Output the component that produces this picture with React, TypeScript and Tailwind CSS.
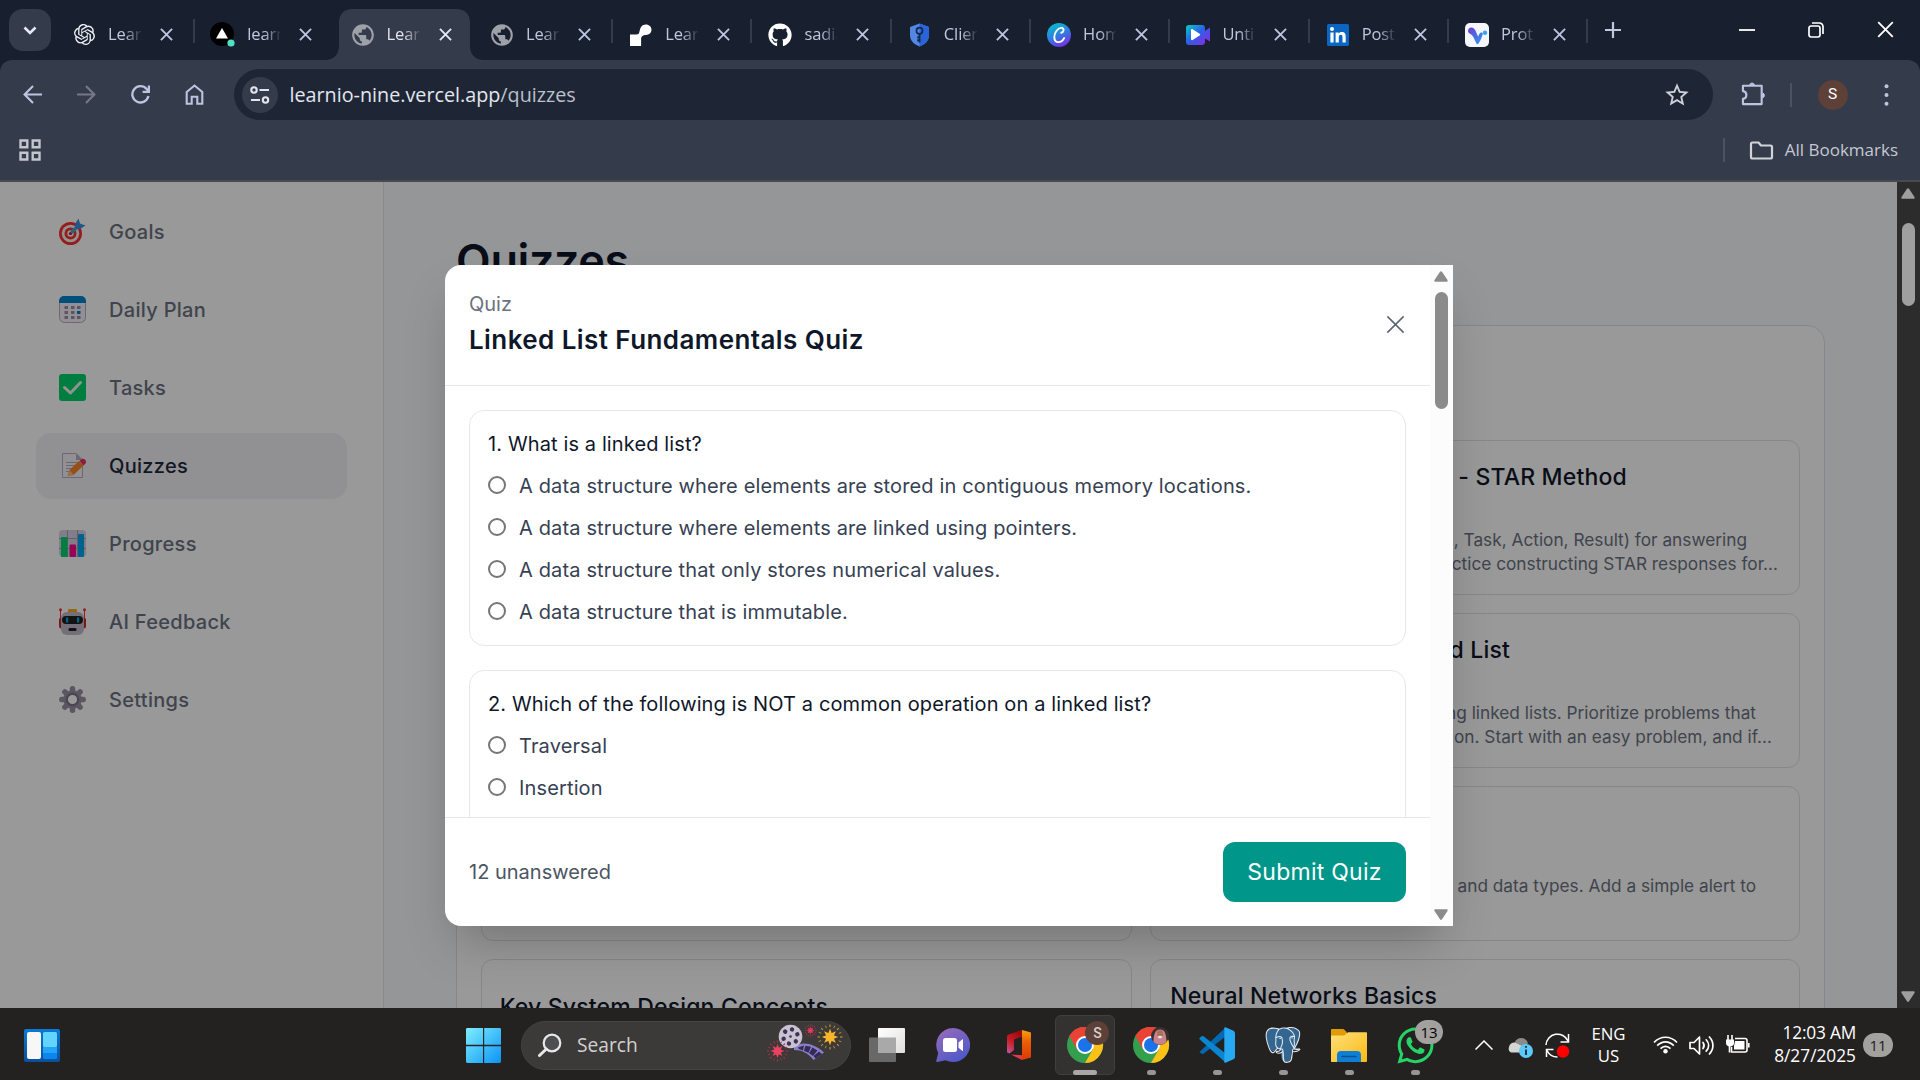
import type { ReactNode } from "react";
import { SiOpenai, SiPostgresql } from "react-icons/si";
import { FaGithub, FaWhatsapp } from "react-icons/fa6";
import { MdPublic, MdStarOutline } from "react-icons/md";

/* ---------- Favicons ---------- */

function VercelIcon() {
  return (
    <svg viewBox="0 0 26 26" className="size-[26px]">
      <circle cx="12" cy="12" r="12" fill="#000" />
      <path d="M12 6l6 10.500H6z" fill="#fff" />
      <circle cx="21" cy="21" r="3.600" fill="#50e3c2" />
    </svg>
  );
}

function BlobIcon() {
  return (
    <svg viewBox="0 0 22 22" className="size-[22px]">
      <path d="M0 10.500h6.500c3.500 0 2.500-3 4-6.500C11.500 1.500 13.500.5 16 .5c3 0 5.500 2.300 5.500 5.300s-2.400 5.200-5.400 5.200c-3 0-5 1-5 4.500V22H0z" fill="#fff" />
    </svg>
  );
}

function ShieldIcon() {
  return (
    <svg viewBox="0 0 20 24" className="h-[24px] w-[19px]">
      <path d="M10 0l10 3.500V12c0 6-4 10-10 12C4 22 0 18 0 12V3.500z" fill="#5486e4" />
      <path d="M10 0l10 3.500V12c0 6-4 10-10 12z" fill="#2b64d9" />
      <circle cx="10" cy="7.500" r="3.200" fill="none" stroke="#13284f" strokeWidth="1.800" />
      <path d="M10 10.500V20M10 14.500H7.500M10 17.500H7.500" stroke="#13284f" strokeWidth="2" fill="none" />
    </svg>
  );
}

function CanvaIcon() {
  return (
    <svg viewBox="0 0 24 24" className="size-6">
      <defs>
        <linearGradient id="cv" x1="0.200" y1="0" x2="0.700" y2="1">
          <stop offset="0" stopColor="#00c4cc" />
          <stop offset="0.500" stopColor="#2f7fe0" />
          <stop offset="1" stopColor="#7d2ae8" />
        </linearGradient>
      </defs>
      <circle cx="12" cy="12" r="12" fill="url(#cv)" />
      <path d="M14.200 9.800c2.600-.6 3.300-4.300.8-4.900-3.800-.6-7.600 4.500-7.700 9 0 3 1.600 5.200 4.300 5.200 2.300 0 4.300-1.600 5.500-4" fill="none" stroke="#fff" strokeWidth="1.900" strokeLinecap="round" />
    </svg>
  );
}

function ClipIcon() {
  return (
    <svg viewBox="0 0 24 20" className="h-[20px] w-[24px]">
      <defs>
        <linearGradient id="cl" x1="0" y1="0" x2="1" y2="1">
          <stop offset="0" stopColor="#06cfc0" />
          <stop offset="0.450" stopColor="#2a62ea" />
          <stop offset="1" stopColor="#9a20e0" />
        </linearGradient>
      </defs>
      <path d="M3 0h13a3 3 0 013 3v3l5-3.500v14L19 13.500V17a3 3 0 01-3 3H3a3 3 0 01-3-3V3a3 3 0 013-3z" fill="url(#cl)" />
      <path d="M5 5.200c0-1 .8-1.400 1.600-1l7 4.600c.8.500.8 1.300 0 1.800l-7 4.500c-.8.500-1.600 0-1.600-1z" fill="#fff" />
    </svg>
  );
}

function LinkedInIcon() {
  return (
    <svg viewBox="0 0 22 22" className="size-[22px]">
      <rect width="22" height="22" rx="1.500" fill="#0a66c2" />
      <circle cx="5" cy="5" r="2" fill="#fff" />
      <path d="M3.400 8.400h3.200v10.200H3.400zM8.600 8.400h3v1.400c.6-1 1.700-1.700 3.200-1.700 3 0 3.900 1.900 3.900 4.700v5.800h-3.200v-5.200c0-1.300-.1-2.700-1.700-2.700s-2 1.300-2 2.600v5.300H8.600z" fill="#fff" />
    </svg>
  );
}

function VIcon() {
  return (
    <svg viewBox="0 0 24 24" className="size-6">
      <defs>
        <linearGradient id="vg" x1="0" y1="0" x2="1" y2="1">
          <stop offset="0" stopColor="#6b3fd4" />
          <stop offset="1" stopColor="#2c9bf0" />
        </linearGradient>
      </defs>
      <rect width="24" height="24" rx="5" fill="#f6f7fd" />
      <path d="M3 8c0-2 1.300-3.600 3.400-3.600 1.800 0 3 .9 4 3.100l2.700 6 1.700-3.300c.6-1.200 3.400-.8 3 .8-1 3.600-2.500 7-4.300 9.500-.7 1-1.700.6-2.200-.3C9.500 16.800 8.500 12.500 5 10.800 3.800 10.200 3 9.200 3 8z" fill="url(#vg)" />
      <circle cx="20" cy="9.700" r="2.200" fill="#35a7f7" />
    </svg>
  );
}

/* ---------- Browser chrome ---------- */

function Cross({ className }: { className: string }) {
  return (
    <svg viewBox="0 0 14 14" className={className} fill="none" stroke="currentColor">
      <path d="M1 1l12 12M13 1L1 13" />
    </svg>
  );
}

type TabProps = { icon: ReactNode; label: string; active?: boolean; sep?: boolean };

function Tab({ icon, label, active, sep }: TabProps) {
  return (
    <div className="relative flex h-[51px] w-[139.300px] shrink-0 items-center">
      {active && (
        <svg viewBox="0 0 160 51" className="absolute -left-[10px] top-0 h-[51px] w-[160px]">
          <path d="M0 51c9 0 14-6 14-14V14C14 5 19 0 28 0h103c9 0 14 5 14 14v23c0 8 5 14 14 14z" fill="#343b4b" />
        </svg>
      )}
      <div className="relative -mt-[9px] ml-[15px] flex h-6 w-[26px] items-center justify-center self-center pt-[9px]">{icon}</div>
      <div className={`relative -mt-[2px] ml-[11px] w-[33px] overflow-hidden whitespace-nowrap text-[16.500px] leading-6 tracking-[-0.100px] [mask-image:linear-gradient(to_right,#000_50%,transparent_105%)] ${active ? "text-[#dfe3ee]" : "text-[#c0c8de]"}`}>
        {label}
      </div>
      <Cross className={`relative -mt-[9px] ml-[19px] box-content size-[13px] pt-[9px] stroke-2 ${active ? "text-[#e4e8f4]" : "text-[#bcc5e0]"}`} />
      {sep && <div className="ml-auto h-6 w-[2px] -translate-y-[4px] bg-[#343b4b]" />}
    </div>
  );
}

const tabs: TabProps[] = [
  { icon: <SiOpenai className="size-[21px] text-[#eef1f8]" />, label: "Learn", sep: true },
  { icon: <VercelIcon />, label: "learnio" },
  { icon: <MdPublic className="size-[26px] shrink-0 text-[#9ea1a8]" />, label: "Learn", active: true },
  { icon: <MdPublic className="size-[26px] shrink-0 text-[#9ea1a8]" />, label: "Learn", sep: true },
  { icon: <BlobIcon />, label: "Learn", sep: true },
  { icon: <FaGithub className="size-6 text-white" />, label: "sadia", sep: true },
  { icon: <ShieldIcon />, label: "Clients", sep: true },
  { icon: <CanvaIcon />, label: "Home", sep: true },
  { icon: <ClipIcon />, label: "Untitled", sep: true },
  { icon: <LinkedInIcon />, label: "Posts", sep: true },
  { icon: <VIcon />, label: "Proto", sep: true },
];

function BrowserChrome() {
  return (
    <header className="h-[182px] bg-[#18202f] font-['Open_Sans',sans-serif]">
      <div className="flex h-[60px] items-start pt-[9px]">
        <div className="ml-[9px] flex h-[42px] w-[42px] shrink-0 items-center justify-center rounded-[14px] bg-[#343b4b]">
          <svg viewBox="0 0 14 9" className="h-[9px] w-[14px]" fill="none" stroke="#e6e9f3" strokeWidth="2.600">
            <path d="M1.500 1.500L7 7l5.500-5.500" />
          </svg>
        </div>
        <div className="ml-[5px] flex">
          {tabs.map((t, i) => (
            <Tab key={i} {...t} />
          ))}
        </div>
        <svg viewBox="0 0 16 16" className="ml-[17px] mt-[13px] size-[16px] shrink-0" stroke="#c0c8de" strokeWidth="2.200">
          <path d="M8 0v16M0 8h16" />
        </svg>
        <div className="ml-auto mr-[26px] mt-[12px] flex items-center gap-[53px] text-white">
          <svg viewBox="0 0 16 16" className="size-[16px]" stroke="currentColor" strokeWidth="1.800">
            <path d="M0 8h16" />
          </svg>
          <svg viewBox="0 0 16 16" className="size-[16px]" fill="none" stroke="currentColor" strokeWidth="1.700">
            <rect x="1" y="4" width="11" height="11" rx="2.200" />
            <path d="M4 1h7.500A3.500 3.500 0 0115 4.500V12" />
          </svg>
          <Cross className="size-[17px] stroke-[1.500]" />
        </div>
      </div>
      <div className="h-[122px] rounded-t-[12px] border-b-2 border-[#484a4f] bg-[#343b4b]">
        <div className="flex h-[69px] items-center text-[#bcc5e0]">
          <svg viewBox="0 0 18 18" className="ml-[23px] size-[19px]" fill="none" stroke="currentColor" strokeWidth="2">
            <path d="M18 9H2M9.500 1L1.500 9l8 8" />
          </svg>
          <svg viewBox="0 0 18 18" className="ml-[35px] size-[19px]" fill="none" stroke="#747987" strokeWidth="2">
            <path d="M0 9h16M8.500 1l8 8-8 8" />
          </svg>
          <svg viewBox="0 0 18 18" className="ml-[35px] size-[19px]" fill="none" stroke="currentColor" strokeWidth="2.200">
            <path d="M16.500 10.500A7.700 7.700 0 1114.800 3.800L17 6M17 .5V6.500H11" />
          </svg>
          <svg viewBox="0 0 18 21" className="ml-[35px] h-[21px] w-[19px]" fill="none" stroke="currentColor" strokeWidth="2.100">
            <path d="M1.200 8L9 1.500 16.800 8v11.800h-5v-7H6.200v7h-5z" />
          </svg>
          <div className="ml-[29.500px] flex h-[51px] w-[1479px] items-center rounded-full bg-[#1e2636]">
            <div className="ml-[8px] flex size-[36px] items-center justify-center rounded-full bg-[#343b4b]">
              <svg viewBox="0 0 20 18" className="h-[18px] w-[20px]" fill="none" stroke="#e3e6ef" strokeWidth="2.100">
                <circle cx="4" cy="4" r="2.700" />
                <path d="M9.500 4H19M1 14h9" />
                <circle cx="15.500" cy="14" r="2.700" />
              </svg>
            </div>
            <p className="ml-[12px] text-[19.750px] leading-7 text-[#e3e6ef]">
              learnio-nine.vercel.app<span className="text-[#bcc0cb]">/quizzes</span>
            </p>
            <MdStarOutline className="ml-auto mr-[22px] size-[28px] text-[#cdd0d8]" />
          </div>
          <svg viewBox="0 0 26 26" className="ml-[28px] size-[25px] -translate-y-[1px]" fill="none" stroke="currentColor" strokeWidth="2.200" strokeLinejoin="round">
            <path d="M2 5h19.500v19H2v-5.500c4.800-.5 4.800-7.500 0-8z" />
            <path d="M9 4a2.600 2.600 0 015 0zM22.500 12.500a2.600 2.600 0 010 5z" fill="currentColor" strokeWidth="1" />
          </svg>
          <div className="ml-[24px] h-6 w-[2px] bg-[#4b5263]" />
          <div className="ml-[26px] flex size-[30px] items-center justify-center rounded-full bg-[#5d4037] font-['Roboto',sans-serif] text-[15.500px] text-white">S</div>
          <svg viewBox="0 0 4 22" className="ml-[36px] h-[22px] w-[5px]" fill="currentColor">
            <circle cx="2" cy="2.300" r="2" />
            <circle cx="2" cy="11" r="2" />
            <circle cx="2" cy="19.700" r="2" />
          </svg>
        </div>
        <div className="flex h-[42px] items-center pr-[22px] text-[#c4c8d2]">
          <svg viewBox="0 0 22 22" className="ml-[19px] size-[22px]" fill="none" stroke="#c3c6cf" strokeWidth="2.400">
            <path d="M1.500 1.500h6.800v6.800H1.500zM13.700 1.500h6.800v6.800h-6.800zM1.500 13.700h6.800v6.800H1.500zM13.700 13.700h6.800v6.800h-6.800z" />
          </svg>
          <div className="ml-auto h-6 w-[2px] bg-[#4b5263]" />
          <svg viewBox="0 0 24 19" className="ml-[24px] h-[19px] w-[25px]" fill="none" stroke="#d0d3da" strokeWidth="2.200" strokeLinejoin="round">
            <path d="M1.500 3c0-1 .5-1.500 1.500-1.500h6L11.500 4.500H21c1 0 1.500.5 1.500 1.500v10c0 1-.5 1.500-1.500 1.500H3c-1 0-1.500-.5-1.500-1.500z" />
          </svg>
          <span className="ml-[11px] text-[17px] leading-6">All Bookmarks</span>
        </div>
      </div>
    </header>
  );
}

/* ---------- Sidebar ---------- */

function TargetIcon() {
  return (
    <svg viewBox="0 0 27 27" className="size-[27px]">
      <circle cx="11.500" cy="15.500" r="11.500" fill="#f8312f" />
      <circle cx="11.500" cy="15.500" r="8.700" fill="#f4f4f4" />
      <circle cx="11.500" cy="15.500" r="6" fill="#f8312f" />
      <circle cx="11.500" cy="15.500" r="3.200" fill="#f4f4f4" />
      <circle cx="11.500" cy="15.500" r="1.600" fill="#ca0b4a" />
      <path d="M12.500 14.500L20 7" stroke="#44a9c9" strokeWidth="3.600" />
      <path d="M16 6l3.500-5.500L21 5.500l5.500 2L21 11l-4.500-.5z" fill="#3f8ee0" />
    </svg>
  );
}

function CalendarIcon() {
  return (
    <svg viewBox="0 0 27 27" className="size-[27px]">
      <rect x="0.500" y="0.500" width="26" height="26" rx="5" fill="#f3eef8" stroke="#b4acbc" />
      <path d="M0 7V5a5 5 0 015-5h17a5 5 0 015 5v2z" fill="#0084ce" />
      <path d="M5.500 10h3.500v3H5.500zM12 10h3.500v3H12zM18 10h3.500v3H18zM5.500 15h3.500v3H5.500zM12 15h3.500v3H12zM5.500 20h3.500v3H5.500zM12 20h3.500v3H12zM18 20h3.500v3H18z" fill="#998ea4" />
      <path d="M18 15h3.500v3H18z" fill="#0084ce" />
    </svg>
  );
}

function CheckIcon() {
  return (
    <svg viewBox="0 0 27 27" className="size-[27px]">
      <rect width="27" height="27" rx="3" fill="#00d26a" />
      <path d="M5.500 13.500l6 5.500L21.500 8.500" fill="none" stroke="#f4f4f4" strokeWidth="3" strokeLinecap="round" strokeLinejoin="round" />
    </svg>
  );
}

function MemoIcon() {
  return (
    <svg viewBox="0 0 27 27" className="size-[27px]">
      <path d="M3.500 1.500h13.500l6.500 6.500v17.500h-20z" fill="#f3eef8" stroke="#b4acbc" />
      <path d="M17 1.500V8h6.500z" fill="#b4acbc" />
      <path d="M7 10.500h13M7 13.500h12M7 16.500h9M7 19.500h5" stroke="#b4acbc" strokeWidth="1.200" />
      <path d="M8.500 24l2-6L20 9l4.500 4.500L14.500 23z" fill="#f9862b" />
      <path d="M8.500 24l2-6 4 5z" fill="#f8c27a" />
      <path d="M20.500 9l2-1.800c2-1.600 6 1.400 4 4.300l-2 2z" fill="#ec2f5d" />
    </svg>
  );
}

function BarsIcon() {
  return (
    <svg viewBox="0 0 27 27" className="size-[27px]">
      <rect width="27" height="27" rx="4" fill="#d9d0e6" />
      <path d="M8.500 0v27M18.500 0v27M0 8.500h27M0 18.500h27" stroke="#a89fb4" />
      <rect x="2" y="7" width="6.500" height="20" rx="1" fill="#00d26a" />
      <rect x="10.500" y="14.500" width="6.500" height="12.500" rx="1" fill="#f70a8d" />
      <rect x="19" y="4" width="6" height="23" rx="1" fill="#00a6ed" />
    </svg>
  );
}

function RobotIcon() {
  return (
    <svg viewBox="0 0 27 27" className="size-[27px]">
      <path d="M1.500 1v10M25.500 1v10" stroke="#f8312f" />
      <circle cx="1.500" cy="1.700" r="1.500" fill="#f8312f" />
      <circle cx="25.500" cy="1.700" r="1.500" fill="#f8312f" />
      <path d="M0 10.500h3v10H2a2 2 0 01-2-2zM24 10.500h3v8a2 2 0 01-2 2h-1z" fill="#ca2c2c" />
      <rect x="9" y="1" width="9" height="5" rx="1" fill="#f3ad1f" />
      <rect x="2" y="4" width="23" height="23" rx="6" fill="#c3bacb" />
      <rect x="3" y="8" width="21" height="8" rx="4" fill="#212121" />
      <rect x="7" y="9.500" width="2.200" height="5" fill="#00a6ed" />
      <rect x="18" y="9.500" width="2.200" height="5" fill="#00a6ed" />
      <rect x="9.500" y="20" width="8" height="3" rx="1.200" fill="#212121" />
    </svg>
  );
}

function GearIcon() {
  return (
    <svg viewBox="-13.500 -13.500 27 27" className="size-[27px]">
      <path d="M0-10.700V10.700M-10.700 0H10.700M-7.600-7.600L7.600 7.600M-7.600 7.600L7.600-7.600" stroke="#998ea4" strokeWidth="5.500" strokeLinecap="round" />
      <circle r="9.300" fill="#998ea4" />
      <circle r="5.700" fill="#fff" stroke="#7d7387" strokeWidth="2.200" />
    </svg>
  );
}

const nav = [
  { icon: <TargetIcon />, label: "Goals" },
  { icon: <CalendarIcon />, label: "Daily Plan" },
  { icon: <CheckIcon />, label: "Tasks" },
  { icon: <MemoIcon />, label: "Quizzes", active: true },
  { icon: <BarsIcon />, label: "Progress" },
  { icon: <RobotIcon />, label: "AI Feedback" },
  { icon: <GearIcon />, label: "Settings" },
];

function Sidebar() {
  return (
    <aside className="w-[384px] shrink-0 border-r border-[#e5e7eb] bg-white pt-[17px]">
      <nav className="ml-[36px] flex w-[311px] flex-col gap-[12px]">
        {nav.map((n) => (
          <div key={n.label} className={`flex h-[66px] items-center rounded-[15px] pl-[23px] text-[20px] font-medium tracking-[0.300px] ${n.active ? "bg-[#f2f2f5] text-[#1e293b]" : "text-[#6b7280]"}`}>
            <span className="-mt-px">{n.icon}</span>
            <span className="ml-[23px]">{n.label}</span>
          </div>
        ))}
      </nav>
    </aside>
  );
}

/* ---------- Quiz list ---------- */

type CardProps = { title?: string; titleRight?: number; lines?: { text: string; right: number }[]; short?: boolean };

function Line({ right, className, children }: { right: number; className: string; children: ReactNode }) {
  return (
    <div className={`flex justify-end whitespace-nowrap ${className}`} style={{ width: right }}>
      <span>{children}</span>
    </div>
  );
}

function QuizCard({ title, titleRight = 300, lines = [], short }: CardProps) {
  return (
    <article className={`h-[154.500px] rounded-[12px] border border-[#e2e2e4] pl-[18px] ${short ? "pt-[30px]" : "pt-[19px]"}`}>
      <Line right={titleRight} className="h-[34px] text-[23px] font-medium leading-[34px] tracking-[0.180px] text-[#0f172a]">{title}</Line>
      <div className="mt-[34px]">
        {lines.map((l) => (
          <Line key={l.text} right={l.right} className="h-[24px] text-[17.250px] leading-6 text-[#6b7280]">{l.text}</Line>
        ))}
      </div>
    </article>
  );
}

const cards: CardProps[] = [
  {},
  {
    title: "Interview Prep - STAR Method",
    titleRight: 458,
    lines: [
      { text: "Review STAR (Situation, Task, Action, Result) for answering", right: 578 },
      { text: "questions. Practice constructing STAR responses for…", right: 609 },
    ],
  },
  {},
  {
    title: "Practice: Linked List",
    titleRight: 341,
    lines: [
      { text: "Solve problems using linked lists. Prioritize problems that", right: 587 },
      { text: "use insertion. Start with an easy problem, and if…", right: 603 },
    ],
  },
  {},
  { title: "JavaScript", titleRight: 120, lines: [{ text: "Practice variables and data types. Add a simple alert to", right: 587 }] },
  { title: "Key System Design Concepts", titleRight: 328, short: true },
  { title: "Neural Networks Basics", titleRight: 268 },
];

function QuizList() {
  return (
    <main className="h-[826px] flex-1 overflow-hidden bg-[#f8fafc] pl-[72px] pt-[49px]">
      <h1 className="h-[60px] text-[45px] font-semibold leading-[60px] tracking-[-0.400px] text-[#0f172a]">Quizzes</h1>
      <section className="mt-[34px] h-[740px] w-[1369px] rounded-[18px] border border-[#dfe2e6] bg-white px-[24px] pt-[114px]">
        <div className="grid grid-cols-[651px_650px] gap-x-[18px] gap-y-[18.500px]">
          {cards.map((c, i) => (
            <QuizCard key={i} {...c} />
          ))}
        </div>
      </section>
    </main>
  );
}

/* ---------- Scrollbars ---------- */

function Arrow({ className }: { className: string }) {
  return (
    <svg viewBox="0 0 14 11" className={className} fill="currentColor">
      <path d="M6 .8c.5-.9 1.500-.9 2 0l5.500 8.200c.5 1 0 1.800-1 1.800h-11c-1 0-1.500-.8-1-1.800z" />
    </svg>
  );
}

/* ---------- Modal ---------- */

function Question({ text, options }: { text: string; options: string[] }) {
  return (
    <section className="h-[235.500px] shrink-0 rounded-[15px] border border-[#e5e7eb] pl-[18px] pt-[18px]">
      <p className="h-[30px] text-[20px] leading-[30px] tracking-[0.120px] text-[#0f172a]">{text}</p>
      <div className="mt-[12px] flex flex-col gap-[12px]">
        {options.map((o) => (
          <label key={o} className="flex h-[30px] items-center gap-[13px] text-[20px] tracking-[0.140px] text-[#364153]">
            <span className="mb-[2px] size-[18px] rounded-full border-2 border-[#767676]" />
            {o}
          </label>
        ))}
      </div>
    </section>
  );
}

function QuizModal() {
  return (
    <div className="flex h-[661px] w-[1008px] overflow-hidden rounded-l-[16px] bg-white shadow-[0_25px_50px_-12px_rgba(0,0,0,0.250)]">
      <div className="flex w-[985px] flex-col">
        <div className="flex h-[121px] shrink-0 justify-between border-b border-[#e5e7eb] pl-[24px] pr-[25px]">
          <div className="pt-[24px]">
            <p className="text-[20px] leading-[30px] text-[#6b7280]">Quiz</p>
            <h2 className="mt-[3px] text-[26px] font-semibold leading-[36px] tracking-[0.420px] text-[#0f172a]">Linked List Fundamentals Quiz</h2>
          </div>
          <Cross className="mt-[50px] size-[19px] stroke-[1.100] text-[#5b6472]" />
        </div>
        <div className="flex h-[431px] flex-col gap-[24px] overflow-hidden pl-[24px] pr-[24px] pt-[24px]">
          <Question
            text="1. What is a linked list?"
            options={[
              "A data structure where elements are stored in contiguous memory locations.",
              "A data structure where elements are linked using pointers.",
              "A data structure that only stores numerical values.",
              "A data structure that is immutable.",
            ]}
          />
          <Question
            text="2. Which of the following is NOT a common operation on a linked list?"
            options={["Traversal", "Insertion"]}
          />
        </div>
        <div className="flex h-[109px] items-center justify-between border-t border-[#e5e7eb] pl-[24px] pr-[24px]">
          <span className="text-[20px] text-[#4b5563]">12 unanswered</span>
          <button className="h-[60px] w-[183px] rounded-[12px] bg-[#009689] text-[23px] tracking-[0.250px] text-white">Submit Quiz</button>
        </div>
      </div>
      <div className="flex w-[23px] flex-col items-center bg-[#fcfcfc] py-[6px] pr-[1px] text-[#8b8b8b]">
        <Arrow className="h-[11px] w-[14px]" />
        <div className="mt-[10px] h-[117px] w-[13px] rounded-full bg-[#8b8b8b]" />
        <Arrow className="mt-auto h-[11px] w-[14px] rotate-180" />
      </div>
    </div>
  );
}

/* ---------- Taskbar ---------- */

function WidgetsIcon() {
  return (
    <svg viewBox="0 0 36 33" className="h-[33px] w-[36px]">
      <defs>
        <linearGradient id="wd" x1="0" y1="0" x2="0" y2="1"><stop offset="0" stopColor="#0a7ad6" /><stop offset="1" stopColor="#0b4f9c" /></linearGradient>
      </defs>
      <rect width="36" height="33" rx="2" fill="url(#wd)" />
      <rect x="3" y="3" width="14" height="27" rx="2" fill="#f7f7f7" />
      <rect x="19" y="3" width="14" height="15" rx="1.500" fill="#62d4fd" />
      <rect x="19" y="18" width="14" height="6" fill="#22a5f8" />
      <path d="M19 24h14v4.500a1.500 1.500 0 01-1.500 1.500h-11a1.500 1.500 0 01-1.500-1.500z" fill="#0b86ea" />
    </svg>
  );
}

function StartIcon() {
  return (
    <svg viewBox="0 0 36 36" className="size-[35px]">
      <defs>
        <linearGradient id="st" gradientUnits="userSpaceOnUse" x1="0" y1="0" x2="36" y2="36"><stop offset="0" stopColor="#7eeffd" /><stop offset="1" stopColor="#0a93f5" /></linearGradient>
      </defs>
      <path d="M1.500 0h16v17.300H0V1.500A1.500 1.500 0 011.500 0zM18.700 0h15.800A1.500 1.500 0 0136 1.500v15.800H18.700zM0 18.700h17.500V36h-16A1.500 1.500 0 010 34.500zM18.700 18.700H36v15.800a1.500 1.500 0 01-1.500 1.500H18.700z" fill="url(#st)" />
    </svg>
  );
}

function SearchArt() {
  const rays = [0, 45, 90, 135, 180, 225, 270, 315];
  const holes = [0, 60, 120, 180, 240, 300];
  const burst = (cx: number, cy: number, r: number, color: string, ray: string) => (
    <g transform={`translate(${cx} ${cy})`}>
      {rays.map((a) => (
        <g key={a} transform={`rotate(${a})`}>
          <path d={`M${-r * 0.25} 0L0 ${-r * 0.66}L${r * 0.25} 0z`} fill={color} />
          <path d={`M0 ${-r * 0.8}V${-r}`} stroke={ray} strokeWidth="1.200" />
          <path d={`M${r * 0.3} ${-r * 0.7}L${r * 0.38} ${-r * 0.9}`} stroke={ray} strokeWidth="0.900" />
        </g>
      ))}
    </g>
  );
  return (
    <svg viewBox="0 0 78 40" className="h-[40px] w-[78px]">
      <path d="M27 23c6-5.500 19-5 30 5.500L46.500 36C41 29 35 26 27 26z" fill="#8b7fc9" />
      <path d="M31 23.500l6-2-1 5-4-1.500zM38.500 21.700l5.500 1-2.500 6-4.500-2zM45.500 23.500l5 3-4.500 5.500-4-3zM52 27.500l3 2.500-6.500 4.500-2-2.500z" fill="#352a55" />
      <circle cx="23.500" cy="12.500" r="11.800" fill="#c9c2d2" />
      <circle cx="23.500" cy="12.500" r="1.300" fill="#3b3350" />
      {holes.map((a) => (
        <circle key={a} cx="23.500" cy="5.300" r="2.200" fill="#3b3350" transform={`rotate(${a + 12} 23.500 12.500)`} />
      ))}
      {burst(63, 13, 12.500, "#f9b52a", "#c98d2b")}
      {burst(43.500, 6.500, 6, "#e8395c", "#a72c45")}
      {burst(10.500, 27, 10.500, "#ee4162", "#b32d48")}
    </svg>
  );
}

function TaskViewIcon() {
  return (
    <svg viewBox="0 0 36 34" className="h-[34px] w-[36px]">
      <defs>
        <linearGradient id="tv" x1="0" y1="0" x2="1" y2="1"><stop offset="0" stopColor="#fff" /><stop offset="1" stopColor="#dedede" /></linearGradient>
      </defs>
      <rect x="0" y="9.500" width="27" height="24.500" rx="1" fill="#686868" />
      <rect x="9" y="0" width="27" height="25" rx="1" fill="url(#tv)" />
      <rect x="9" y="9.500" width="18" height="15.500" fill="#a9a9a9" />
    </svg>
  );
}

function ChatIcon() {
  return (
    <svg viewBox="0 0 34 34" className="size-[34px]">
      <defs>
        <linearGradient id="ch" x1="0" y1="0" x2="0.600" y2="1"><stop offset="0" stopColor="#9c6bb8" /><stop offset="1" stopColor="#5059c9" /></linearGradient>
      </defs>
      <path d="M17 0a17 17 0 11-7.500 32.200L1.500 34c-1 .2-1.500-.4-1.200-1.300L2.200 25A17 17 0 0117 0z" fill="url(#ch)" />
      <rect x="7" y="10" width="14" height="14" rx="2.500" fill="#fff" />
      <path d="M22.500 14.500l4-3.200c.5-.3.500 0 .5.500v10.600c0 .5 0 .8-.5.500l-4-3.200z" fill="#fff" />
    </svg>
  );
}

function OfficeIcon() {
  return (
    <svg viewBox="0 0 24 30" className="h-[30px] w-[24px]">
      <defs>
        <linearGradient id="of" x1="0" y1="0" x2="0" y2="1"><stop offset="0" stopColor="#f5a30c" /><stop offset="0.400" stopColor="#ee5d07" /><stop offset="1" stopColor="#d83b01" /></linearGradient>
        <linearGradient id="og" x1="0.500" y1="0" x2="0" y2="1"><stop offset="0" stopColor="#a3080f" /><stop offset="0.500" stopColor="#c9202a" /><stop offset="1" stopColor="#c45ba0" /></linearGradient>
      </defs>
      <path d="M15 0l9 2.500v25L15 30z" fill="url(#of)" />
      <path d="M15 0v6.500L7 9.500V20l-4.500 3.500C1 23 0 22.500 0 21.500V7c0-1.500.8-2.300 2-2.800z" fill="url(#og)" />
      <path d="M4 24.500l11 .8V30z" fill="#e33b4d" />
    </svg>
  );
}

function ChromeIcon({ badge }: { badge: ReactNode }) {
  return (
    <svg viewBox="0 0 48 48" className="size-[48px]">
      <g transform="translate(24 24)">
        <circle r="18" fill="#34a04f" />
        <path d="M-15.600-9A18 18 0 0115.600-9H0z" fill="#ea4335" />
        <path d="M-15.600-9A18 18 0 010-18V-8L-7.800 4.500z" fill="#ea4335" />
        <path d="M15.600-9A18 18 0 010 18L7.800 4.500 0-9z" fill="#fbc116" />
        <circle r="9" fill="#fff" />
        <circle r="7" fill="#1a73e8" />
      </g>
      {badge}
    </svg>
  );
}

function VSCodeIcon() {
  return (
    <svg viewBox="0 0 36 36" className="size-[36px]">
      <path d="M1.300 24.300L26.500.5v9L4.500 26.700c-.6.500-1.300.5-1.900 0L.8 25.200c-.4-.3 0-.6.500-.9z" fill="#0069b3" />
      <path d="M.8 10.800L2.600 9.300c.6-.5 1.300-.5 1.900 0l22 17.200v9L.8 12.600c-.5-.5-.5-1.300 0-1.800z" fill="#0a86d1" />
      <path d="M26.500.2L34 3.500c1.200.6 2 1.500 2 2.800v23.400c0 1.300-.8 2.200-2 2.800l-7.500 3.300c-.5.200-1.200 0-1.200-1V1.200c0-1 .7-1.200 1.200-1z" fill="#27a8f2" />
    </svg>
  );
}

function PostgresIcon() {
  return (
    <div className="relative size-[36px]">
      <svg viewBox="0 0 36 36" className="absolute inset-0 size-[36px]">
        <path d="M8 1C3 1 1 4 1.500 9c.6 6 3 13 5.500 15 2 1 3-1 5-2.500 2 1.500 3 1 4 3 0 4 0 10 5 10.500 5 0 5-5 6-12 3 0 6-.5 7-2-1-1-4 .5-4-1 2-3 6-12 4.500-16C32 .5 27 .5 23 1.500 18 .8 14 1.500 8 1z" fill="#336791" />
      </svg>
      <SiPostgresql className="relative size-[36px] text-[#dfe6ec]" />
    </div>
  );
}

function FolderIcon() {
  return (
    <svg viewBox="0 0 36 33" className="h-[33px] w-[36px]">
      <defs>
        <linearGradient id="fo" x1="0" y1="0" x2="1" y2="1"><stop offset="0" stopColor="#ffe07a" /><stop offset="1" stopColor="#fbb915" /></linearGradient>
      </defs>
      <path d="M1 0h10.500c1 0 1.500.3 2.200 1L16 3.500V9H0V1c0-.6.400-1 1-1z" fill="#e09b07" />
      <path d="M0 6.500h12c1 0 1.800-.3 2.500-1L16 4c.5-.6 1-.8 2-.8h17c.6 0 1 .4 1 1V32c0 .6-.4 1-1 1H1c-.6 0-1-.4-1-1z" fill="url(#fo)" />
      <path d="M6 33v-7a4 4 0 014-4h16a4 4 0 014 4v7z" fill="#0f7fd6" />
      <path d="M11 27.500h14" stroke="#0a4f94" strokeWidth="1.600" strokeLinecap="round" />
    </svg>
  );
}

function Cell({ children, running, active }: { children: ReactNode; running?: boolean; active?: boolean }) {
  return (
    <div className="flex w-[66px] shrink-0 justify-center">
      <div className={`relative flex h-[60px] w-[60px] items-center justify-center rounded-[6px] ${active ? "border border-[#403f3e] bg-[#333231]" : ""}`}>
        {children}
        {running && (
          <div className={active ? "absolute -bottom-px left-[17px] h-[5px] w-[24px] rounded-full bg-[#aaa8a5]" : "absolute bottom-0 left-[25.500px] h-[5px] w-[9px] rounded-full bg-[#989693]"} />
        )}
      </div>
    </div>
  );
}

function Taskbar() {
  return (
    <footer className="flex h-[72px] items-center bg-[#242221] pt-[2px] font-['Open_Sans',sans-serif] text-white">
      <div className="ml-[24px]"><WidgetsIcon /></div>
      <div className="ml-[406px]"><StartIcon /></div>
      <div className="ml-[20px] flex h-[49px] w-[330px] shrink-0 items-center rounded-full border border-[#454443] bg-[#3b3a39]">
        <svg viewBox="0 0 24 24" className="ml-[16px] size-[24px]" fill="none" stroke="#e8e8ea" strokeWidth="2.200">
          <circle cx="14" cy="10" r="8.300" fill="#4c4e51" />
          <path d="M8.300 16L1.500 22.500" strokeWidth="3" strokeLinecap="round" />
        </svg>
        <span className="ml-[15px] text-[19.200px] leading-7 text-[#d2d1d0]">Search</span>
        <div className="ml-auto mr-[5px] -mt-[2px]"><SearchArt /></div>
      </div>
      <div className="ml-[3px] flex">
        <Cell><TaskViewIcon /></Cell>
        <Cell><ChatIcon /></Cell>
        <Cell><OfficeIcon /></Cell>
        <Cell active running>
          <ChromeIcon
            badge={
              <g>
                <circle cx="36" cy="12" r="12" fill="#5d4037" />
                <text x="36.500" y="17" textAnchor="middle" fontSize="14" fontWeight="500" fill="#d6cfcb" fontFamily="Roboto">S</text>
              </g>
            }
          />
        </Cell>
        <Cell running>
          <ChromeIcon
            badge={
              <g>
                <circle cx="33" cy="15" r="9" fill="#3a2f2e" />
                <path d="M26.500 21c0-6 1-12.500 6.500-12.500s6 5.500 6.500 12.500c-4 3.500-9 3.500-13 0z" fill="#c9828c" />
                <ellipse cx="33" cy="13" rx="3" ry="4" fill="#a8705a" />
                <path d="M30.500 15.500c1.500-1 3.500-1 5 0-.5 2.500-4.500 2.500-5 0z" fill="#e8e3e0" />
              </g>
            }
          />
        </Cell>
        <Cell running><VSCodeIcon /></Cell>
        <Cell running><PostgresIcon /></Cell>
        <Cell running><FolderIcon /></Cell>
        <Cell running>
          <FaWhatsapp className="size-[41px] shrink-0 text-[#25d366]" />
          <div className="absolute right-[2px] top-[5px] flex h-6 w-[28px] items-center justify-center rounded-full bg-[#a3a19e] text-[15px] text-black">13</div>
        </Cell>
      </div>
      <svg viewBox="0 0 18 10" className="ml-[27px] h-[10px] w-[18px] shrink-0" fill="none" stroke="#fff" strokeWidth="1.500">
        <path d="M.5 9.500L9 1l8.500 8.500" />
      </svg>
      <svg viewBox="0 0 25 21" className="ml-[15px] mt-[4px] h-[21px] w-[25px] shrink-0">
        <path d="M7 5a7 7 0 0113 1l-6 9H6z" fill="#8a8a8a" />
        <path d="M1 10a5.500 5.500 0 016-4.500L14 9l-1 6.500H4C1.500 15.500 0 13 1 10z" fill="#d5d5d5" />
        <circle cx="18" cy="14" r="7" fill="#5cc8fb" />
        <path d="M18 9v1.800M18 12.500v5.500" stroke="#1b2a33" strokeWidth="1.800" />
      </svg>
      <svg viewBox="0 0 25 25" className="ml-[12px] size-[25px] shrink-0" fill="none" stroke="#fff" strokeWidth="1.500">
        <path d="M1 12A11.500 11.500 0 0123 8M23.500 1v8h-8M1.500 24v-7.500h7M2 17.500A11.500 11.500 0 0012.500 24" />
        <circle cx="18" cy="18.500" r="6.200" fill="#fe0000" stroke="none" />
      </svg>
      <div className="ml-[19px] w-[39px] text-center text-[16.800px] leading-[22.500px]">
        <div>ENG</div>
        <div>US</div>
      </div>
      <svg viewBox="0 0 25 18" className="ml-[25px] h-[18px] w-[25px] shrink-0" fill="none" stroke="#fff" strokeWidth="1.700">
        <path d="M1 6.500C7.500-.5 17.500-.5 24 6.500M4.200 9.700c5-5 11.600-5 16.600 0M7.500 12.700c3-3 7-3 10 0" />
        <circle cx="12.500" cy="15.300" r="2.200" fill="#fff" stroke="none" />
      </svg>
      <svg viewBox="0 0 25 21" className="ml-[11px] h-[21px] w-[25px] shrink-0" fill="none" stroke="#fff" strokeWidth="1.700" strokeLinejoin="round" strokeLinecap="round">
        <path d="M1 7.500h4L10.500 2v17L5 13.500H1zM14 7.500c1.500 2 1.500 4 0 6M17.200 4.800c3.200 3.500 3.200 8 0 11.400M20.400 2c4.700 5 4.700 12 0 17" />
      </svg>
      <svg viewBox="0 0 25 19" className="ml-[11px] h-[19px] w-[25px] shrink-0 -translate-y-[1px]" fill="none" stroke="#fff" strokeWidth="1.600">
        <path d="M10 3.500h10c1.200 0 2 .8 2 2v9.500c0 1.200-.8 2-2 2H6.500V12" />
        <path d="M10 6h9.500v8.500H9V11z" fill="#fff" stroke="none" />
        <path d="M1 4.500h8V8c0 2-1.500 3.500-4 3.500S1 10 1 8z" fill="#fff" stroke="none" />
        <path d="M3 0v5M7 0v5M4.500 11v6.500M23.800 8v4.500" />
      </svg>
      <div className="-mt-[2px] ml-auto mr-[7px] text-right text-[17.300px] leading-[23px]">
        <div className="tracking-[-0.200px]">12:03 AM</div>
        <div>8/27/2025</div>
      </div>
      <div className="mr-[27px] flex h-6 w-[30px] items-center justify-center rounded-full bg-[#a3a19e] text-[15px] text-[#1d1c1b]">11</div>
    </footer>
  );
}

/* ---------- App ---------- */

export default function App() {
  return (
    <div className="flex h-[1080px] w-[1920px] flex-col overflow-hidden">
      <BrowserChrome />
      <div className="flex h-[826px] font-['Inter',sans-serif]">
        <div className="relative flex w-[1897px] overflow-hidden">
          <Sidebar />
          <QuizList />
          <div className="absolute inset-0 bg-black/40 pl-[445px] pt-[83px]">
            <QuizModal />
          </div>
        </div>
        <div className="flex w-[23px] flex-col items-center bg-[#2c2c2c] py-[6px] pr-[1px] text-[#9f9f9f]">
          <Arrow className="h-[11px] w-[14px]" />
          <div className="mt-[24px] h-[83px] w-[13px] rounded-full bg-[#9f9f9f]" />
          <Arrow className="mt-auto h-[11px] w-[14px] rotate-180" />
        </div>
      </div>
      <Taskbar />
    </div>
  );
}
